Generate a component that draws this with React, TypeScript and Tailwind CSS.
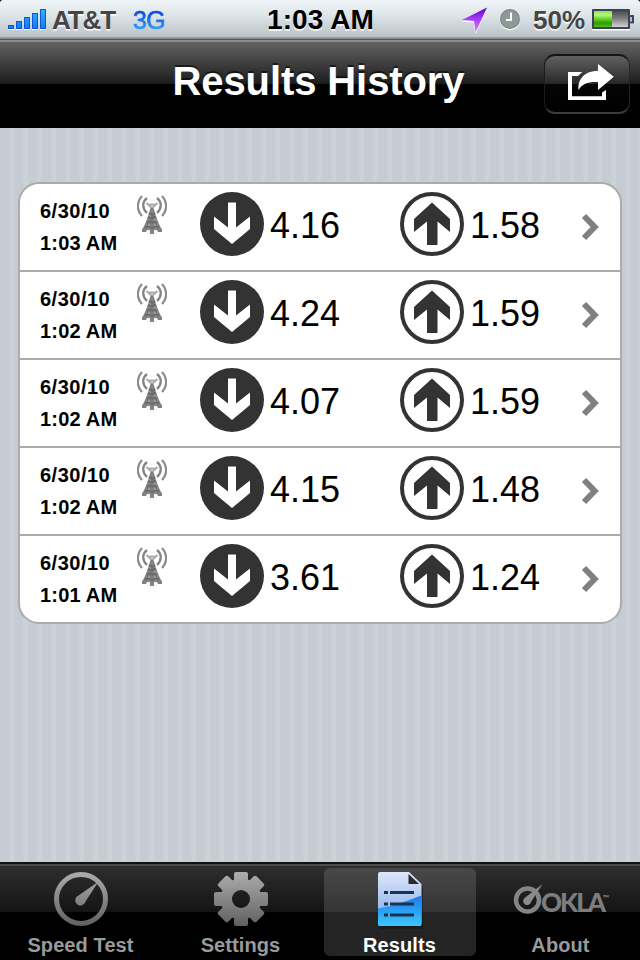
import React from 'react';

interface Result {
  id: number;
  date: string;
  time: string;
  down: string;
  up: string;
}

const results: Result[] = [
  { id: 1, date: '6/30/10', time: '1:03 AM', down: '4.16', up: '1.58' },
  { id: 2, date: '6/30/10', time: '1:02 AM', down: '4.24', up: '1.59' },
  { id: 3, date: '6/30/10', time: '1:02 AM', down: '4.07', up: '1.59' },
  { id: 4, date: '6/30/10', time: '1:02 AM', down: '4.15', up: '1.48' },
  { id: 5, date: '6/30/10', time: '1:01 AM', down: '3.61', up: '1.24' },
];

function SignalBars() {
  const heights = [4, 8, 12, 16, 20];
  return (
    <svg width="40" height="24" viewBox="0 0 40 24" shapeRendering="crispEdges">
      <defs>
        <linearGradient id="bars" x1="0" y1="0" x2="0" y2="22" gradientUnits="userSpaceOnUse">
          <stop offset="0" stopColor="#3fb4ff" />
          <stop offset="1" stopColor="#0b7bf0" />
        </linearGradient>
      </defs>
      {heights.map((h, i) => (
        <g key={h}>
          <rect x={i * 8} y={22 - h} width="6" height={h} fill="#0b58d8" />
          <rect x={i * 8 + 1} y={23 - h} width="4" height={h - 2} fill="url(#bars)" />
          <rect x={i * 8} y="22" width="6" height="1" fill="#fff" />
        </g>
      ))}
    </svg>
  );
}

function LocationArrow() {
  return (
    <svg width="26" height="28" viewBox="0 0 26 28">
      <defs>
        <linearGradient id="loc" x1="0" y1="0" x2="0" y2="1">
          <stop offset="0" stopColor="#5a00c8" />
          <stop offset="0.45" stopColor="#a838fb" />
          <stop offset="1" stopColor="#d98cff" />
        </linearGradient>
      </defs>
      <path d="M0 14.5 L25 2 L13.5 27 L11.5 15.5Z" fill="#fff" />
      <path d="M0 13 L25 0.5 L13.5 25.5 L12 14Z" fill="url(#loc)" />
    </svg>
  );
}

function ClockIcon() {
  return (
    <svg width="20" height="22" viewBox="0 0 20 22">
      <circle cx="10" cy="11.2" r="10" fill="#fff" />
      <circle cx="10" cy="10" r="10" fill="#74827f" />
      <circle cx="10" cy="10" r="9" fill="#8d9a98" />
      <path d="M11 3.5v7.5H6" fill="none" stroke="#fff" strokeWidth="2" />
    </svg>
  );
}

function Battery() {
  return (
    <svg width="42" height="22" viewBox="0 0 42 22">
      <defs>
        <linearGradient id="charge" x1="0" y1="0" x2="0" y2="1">
          <stop offset="0" stopColor="#8fe04f" />
          <stop offset="0.25" stopColor="#b4f77c" />
          <stop offset="0.5" stopColor="#6bd02a" />
          <stop offset="0.75" stopColor="#2f9a08" />
          <stop offset="1" stopColor="#4fc218" />
        </linearGradient>
        <linearGradient id="empty" x1="0" y1="0" x2="0" y2="1">
          <stop offset="0" stopColor="#4c4c4c" />
          <stop offset="0.45" stopColor="#7c7c7c" />
          <stop offset="1" stopColor="#d2d2d2" />
        </linearGradient>
      </defs>
      <rect x="0" y="20" width="38" height="1.5" fill="#fff" />
      <rect x="0" y="0" width="38" height="20" rx="1" fill="#3b4358" />
      <rect x="2" y="2" width="34" height="16" fill="url(#empty)" />
      <rect x="2" y="2" width="18" height="16" fill="url(#charge)" />
      <rect x="38" y="6" width="4" height="8.5" rx="1" fill="#3b4358" />
      <rect x="38" y="8" width="2" height="4.5" fill="#b7bdc6" />
    </svg>
  );
}

function StatusBar() {
  return (
    <div className="bg-black">
      <div className="flex h-10 items-start rounded-t-[3px] border-b border-[#59595a] bg-[linear-gradient(#eff5f8_0px,#dde4e8_16px,#bcc3c8_37px,#737a7d_38px,#909699_39px)] pl-2 leading-10">
        <div className="mt-[7px] w-10">
          <SignalBars />
        </div>
        <span className="ml-[4px] w-[81px] text-[26px] font-bold tracking-[-1.1px] whitespace-nowrap text-[#454545] [text-shadow:0_2px_0_rgba(255,255,255,0.7)]">
          AT&amp;T
        </span>
        <span className="w-[134px] bg-[linear-gradient(#0a3fd6_10px,#2ba1ff_30px)] bg-clip-text text-[25px] tracking-[-0.6px] text-transparent [-webkit-text-stroke:0.7px_transparent]">
          3G
        </span>
        <span className="w-[195px] text-[28px] font-bold tracking-[0.1px] whitespace-nowrap text-black [text-shadow:0_2px_0_rgba(255,255,255,0.7)]">
          1:03 AM
        </span>
        <span className="mt-[7px] w-[38px]">
          <LocationArrow />
        </span>
        <span className="mt-[9px] w-[33px]">
          <ClockIcon />
        </span>
        <span className="w-[59px] text-[26px] font-bold tracking-[0.1px] text-[#454545] [text-shadow:0_2px_0_rgba(255,255,255,0.7)]">
          50%
        </span>
        <span className="mt-[9px]">
          <Battery />
        </span>
      </div>
    </div>
  );
}

function ShareIcon() {
  return (
    <svg width="46" height="36" viewBox="0 0 46 36">
      <path d="M14.2 8 H0 V36 H38 V26 L34 28.5 V32.2 H4 V12 H10Z" fill="#fff" />
      <path d="M30 0 L45.8 12.8 L30 26 V18 C20 17.5 14.5 19.5 10.5 26 C9.5 15 17 7 30 6.8Z" fill="#fff" />
    </svg>
  );
}

function NavBar() {
  return (
    <header className="grid h-[88px] grid-cols-[1fr_auto_1fr] bg-[linear-gradient(#8e8e8e_0px,#8e8e8e_2px,#626262_2px,#1c1c1c_44px,#000_44px)]">
      <div />
      <h1 className="pr-[3px] text-[40px] leading-[82px] font-bold tracking-[-0.1px] whitespace-nowrap text-white [text-shadow:0_-2px_0_rgba(0,0,0,0.55)]">
        Results History
      </h1>
      <div className="flex items-start justify-end pt-[14px] pr-[10px]">
        <button className="flex h-[60px] w-[86px] items-start rounded-[11px] border-t-2 border-r border-b-2 border-l border-t-[#151515] border-r-[#262626] border-b-[#3c3c3c] border-l-[#1c1c1c] bg-[linear-gradient(#616161_0px,#272727_28px,#050505_28px,#000_58px)] pt-2 pl-[23px]">
          <ShareIcon />
        </button>
      </div>
    </header>
  );
}

function TowerIcon() {
  return (
    <svg width="30" height="40" viewBox="0 0 30 40" fill="none">
      <path d="M5 1 C-0.5 7 -0.5 15 5 21 M25 1 C30.5 7 30.5 15 25 21" stroke="#8c8c8c" strokeWidth="2.3" />
      <path d="M10 3 C5 7 5 13 10 18 M20 3 C25 7 25 13 20 18" stroke="#858585" strokeWidth="2.3" />
      <path d="M9.5 8 L15 13 L20.5 8 M12.5 9.5h5" stroke="#a8a8a8" strokeWidth="2" />
      <path d="M13.5 13h3l1.5 5 2 6 2 5 2 4 1 1v3h-4l-1-2h-3v4h-4v-4h-3l-1 2H5v-3l1-1 2-4 2-5 2-6Z" fill="#828282" />
      <path d="M12 18l3 2 3-2 M11 23l2-1.5 2 2 2-2 2 1.5 M10 28l3-2 2 2 2-2 3 2 M8 33l3-2 4 2 4-2 3 2" stroke="#686868" strokeWidth="1.6" />
      <path d="M12 21h2 M17 25h2 M11 30h2 M17 30h2 M11 35h1.5 M17.5 35h2" stroke="#b5b5b5" />
    </svg>
  );
}

function DownIcon() {
  return (
    <svg width="64" height="64" viewBox="0 0 64 64">
      <circle cx="32" cy="32" r="32" fill="#333" />
      <path d="M28 10.5h8V35.5L50 24.5V37L32 52 14 37V24.5L28 35.5Z" fill="#fff" />
    </svg>
  );
}

function UpIcon() {
  return (
    <svg width="64" height="64" viewBox="0 0 64 64">
      <circle cx="32" cy="32" r="30" fill="#fff" stroke="#333" strokeWidth="4" />
      <path d="M27 53h10.5V29.5L50 40V27L32 10.5 14 27v13L27 29.5Z" fill="#333" />
    </svg>
  );
}

function ResultRow({ result }: { result: Result }) {
  return (
    <li className="flex h-[88px] items-start border-b-2 border-[#ababab] pl-5 text-black last:h-[86px] last:border-b-0">
      <div className="w-[97px] pt-[11px] text-[20px] leading-8 font-bold whitespace-nowrap">
        <div className="tracking-[0.5px]">{result.date}</div>
        <div className="tracking-[0.2px]">{result.time}</div>
      </div>
      <div className="w-[63px] pt-[11px]">
        <TowerIcon />
      </div>
      <div className="flex w-[200px] pt-2">
        <DownIcon />
        <span className="pl-[6px] text-[36px] leading-[68px]">{result.down}</span>
      </div>
      <div className="flex w-[180px] pt-2">
        <UpIcon />
        <span className="pl-[6px] text-[36px] leading-[68px]">{result.up}</span>
      </div>
      <svg className="mt-[29px]" width="20" height="28" viewBox="0 0 20 28">
        <path d="M4 3 L14.7 14 L4 25" fill="none" stroke="#808080" strokeWidth="6" />
      </svg>
    </li>
  );
}

function TabGradient({ id }: { id: string }) {
  return (
    <linearGradient id={id} x1="0" y1="0" x2="0" y2="54" gradientUnits="userSpaceOnUse">
      <stop offset="0" stopColor="#adadad" />
      <stop offset="1" stopColor="#606060" />
    </linearGradient>
  );
}

function GaugeIcon() {
  return (
    <svg width="54" height="54" viewBox="0 0 54 54">
      <defs>
        <TabGradient id="gauge" />
      </defs>
      <circle cx="27" cy="27" r="24.5" fill="none" stroke="url(#gauge)" strokeWidth="5" />
      <path d="M44.5 9.5 L31.5 29.5 A5.2 5.2 0 1 1 24.5 23.5Z" fill="url(#gauge)" />
    </svg>
  );
}

function GearIcon() {
  return (
    <svg width="54" height="54" viewBox="0 0 54 54">
      <defs>
        <TabGradient id="gear" />
        <mask id="teeth">
          <circle cx="27" cy="27" r="20.5" fill="#fff" />
          {[0, 45, 90, 135].map(angle => (
            <rect key={angle} x="20" y="0" width="14" height="54" rx="2" fill="#fff" transform={`rotate(${angle} 27 27)`} />
          ))}
          <circle cx="27" cy="27" r="9" fill="#000" />
        </mask>
      </defs>
      <rect width="54" height="54" fill="url(#gear)" mask="url(#teeth)" />
    </svg>
  );
}

function DocumentIcon() {
  return (
    <svg width="46" height="54" viewBox="0 0 46 54" className="overflow-visible">
      <defs>
        <linearGradient id="docTop" x1="0" y1="0" x2="0" y2="1">
          <stop offset="0" stopColor="#dfe6f8" />
          <stop offset="1" stopColor="#79a6ea" />
        </linearGradient>
        <linearGradient id="docBottom" x1="0" y1="0" x2="0" y2="1">
          <stop offset="0" stopColor="#1c78e8" />
          <stop offset="1" stopColor="#3cc8ff" />
        </linearGradient>
      </defs>
      <path d="M4 3H33L46 15V55q0 2-2 2H4q-2 0-2-2V5q0-2 2-2Z" fill="#111" opacity="0.45" />
      <path d="M3 0H32L44.5 12V52q0 2-2 2H3q-2 0-2-2V2q0-2 2-2Z" fill="url(#docTop)" />
      <path d="M1 36.5 C16 34 30 29 44.5 23.5V52q0 2-2 2H3q-2 0-2-2Z" fill="url(#docBottom)" />
      <path d="M31.5 2V12H42Z" fill="#29292b" />
      <path d="M7 20.5h4M13 20.5h24M7 32h4M13 32h24M7 43h4M13 43h24" stroke="#173451" strokeWidth="2.8" />
    </svg>
  );
}

function OoklaLogo() {
  return (
    <svg width="100" height="34" viewBox="0 0 100 34" className="overflow-visible">
      <circle cx="16.5" cy="18" r="11.5" fill="none" stroke="#858585" strokeWidth="4.5" />
      <path d="M31.5 2 L20 20 A4 4 0 1 1 13.5 16Z" fill="#8b8b8b" />
      <text
        x="30"
        y="30"
        fontSize="26"
        fontWeight="900"
        fill="#7d7d7d"
        className="font-['Lato',sans-serif] tracking-[-2px]"
      >
        OKLA<tspan fontSize="8" dx="-1" dy="-11">™</tspan>
      </text>
    </svg>
  );
}

const tabs = [
  { label: 'Speed Test', icon: <GaugeIcon />, active: false },
  { label: 'Settings', icon: <GearIcon />, active: false },
  { label: 'Results', icon: <DocumentIcon />, active: true },
  { label: 'About', icon: <OoklaLogo />, active: false },
];

function TabBar() {
  return (
    <nav className="grid h-[98px] grid-cols-4 bg-[linear-gradient(#111_0px,#111_2px,#4c4c4c_2px,#4c4c4c_4px,#2e2e2e_4px,#141414_50px,#000_50px)] pt-[6px]">
      {tabs.map(tab => (
        <div
          key={tab.label}
          className={
            tab.active
              ? 'mx-1 flex h-[88px] flex-col items-center rounded-md bg-[linear-gradient(#484848_0px,#353535_44px,#242424_44px,#242424_88px)] text-white'
              : 'mx-1 flex h-[88px] flex-col items-center pl-[2px] text-[#9a9a9a]'
          }
        >
          <div className="flex h-[58px] shrink-0 items-center pt-1">{tab.icon}</div>
          <span className="pt-1 pr-px text-[20px] leading-[30px] font-bold tracking-[0.1px] whitespace-nowrap">
            {tab.label}
          </span>
        </div>
      ))}
    </nav>
  );
}

export default function App() {
  return (
    <div className="flex h-[960px] w-[640px] flex-col overflow-hidden font-['Liberation_Sans',Arial,sans-serif]">
      <StatusBar />
      <NavBar />
      <main className="flex-1 bg-[repeating-linear-gradient(90deg,#c5ccd4_0px,#c5ccd4_9px,#c8cfd6_9px,#c8cfd6_10px,#cbd2d8_10px,#cbd2d8_14px)] px-[18px] pt-[54px]">
        <ul className="overflow-hidden rounded-[21px] border-2 border-[#ababab] bg-white">
          {results.map(result => (
            <ResultRow key={result.id} result={result} />
          ))}
        </ul>
      </main>
      <TabBar />
    </div>
  );
}
